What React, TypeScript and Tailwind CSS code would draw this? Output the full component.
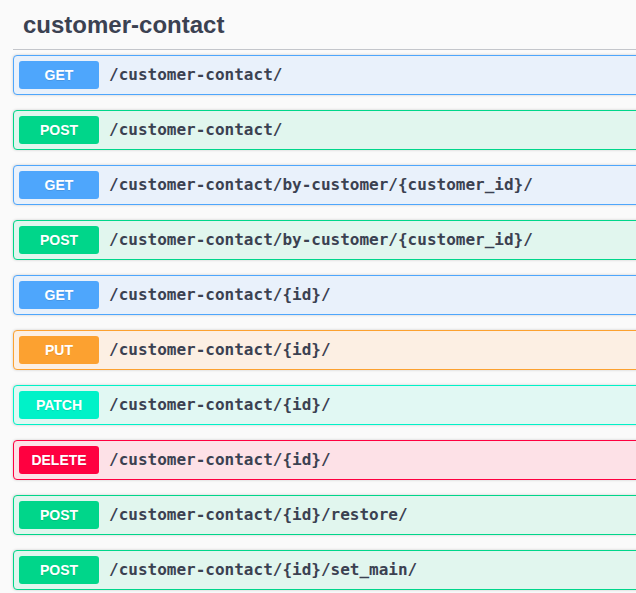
import React from 'react';

type Method = 'GET' | 'POST' | 'PUT' | 'PATCH' | 'DELETE';

const styles: Record<Method, { row: string; badge: string }> = {
  GET: { row: 'border-[#4ea6fc] bg-[#e9f1fb]', badge: 'bg-[#4ea6fc]' },
  POST: { row: 'border-[#00d68a] bg-[#e1f6ee]', badge: 'bg-[#00d68a]' },
  PUT: { row: 'border-[#fca130] bg-[#fcefe3]', badge: 'bg-[#fca130]' },
  PATCH: { row: 'border-[#00f2c8] bg-[#e1f8f3]', badge: 'bg-[#00f2c8]' },
  DELETE: { row: 'border-[#ff0040] bg-[#fde1e7]', badge: 'bg-[#ff0040]' },
};

const endpoints: { method: Method; path: string }[] = [
  { method: 'GET', path: '/customer-contact/' },
  { method: 'POST', path: '/customer-contact/' },
  { method: 'GET', path: '/customer-contact/by-customer/{customer_id}/' },
  { method: 'POST', path: '/customer-contact/by-customer/{customer_id}/' },
  { method: 'GET', path: '/customer-contact/{id}/' },
  { method: 'PUT', path: '/customer-contact/{id}/' },
  { method: 'PATCH', path: '/customer-contact/{id}/' },
  { method: 'DELETE', path: '/customer-contact/{id}/' },
  { method: 'POST', path: '/customer-contact/{id}/restore/' },
  { method: 'POST', path: '/customer-contact/{id}/set_main/' },
];

const OpBlock = ({ method, path }: { method: Method; path: string }) => {
  const s = styles[method];
  return (
    <div className={`mb-[15px] rounded-[4px] border shadow-[0_0_3px_rgba(0,0,0,0.19)] ${s.row}`}>
      <div className="flex items-center p-[5px]">
        <span
          className={`w-[80px] rounded-[3px] py-[6px] text-center text-[14px] leading-[16px] font-bold text-white [text-shadow:0_1px_0_rgba(0,0,0,0.1)] ${s.badge}`}
          style={{ fontFamily: '"Liberation Sans", Arial, sans-serif' }}
        >
          {method}
        </span>
        <span
          className="px-[10px] text-[16px] font-bold text-[#3b4151]"
          style={{ fontFamily: '"DejaVu Sans Mono", monospace' }}
        >
          {path}
        </span>
      </div>
    </div>
  );
};

export default function App() {
  return (
    <div className="h-[593px] w-[636px] overflow-hidden bg-[#fafafa]">
      <div className="w-[720px] pl-[13px]">
        <h3
          className="mb-[5px] flex h-[50px] items-center border-b border-[#c4c6cb] pl-[10px] text-[24px] font-bold text-[#3b4151]"
          style={{ fontFamily: '"Liberation Sans", Arial, sans-serif' }}
        >
          customer-contact
        </h3>
        {endpoints.map((e, i) => (
          <OpBlock key={i} method={e.method} path={e.path} />
        ))}
      </div>
    </div>
  );
}
